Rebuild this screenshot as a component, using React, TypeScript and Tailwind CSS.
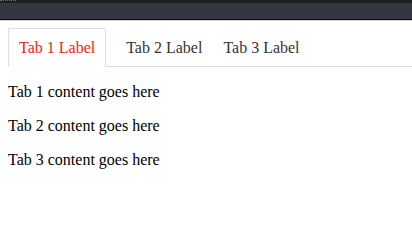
import React, { useState } from 'react';

const tabs = ['Tab 1 Label', 'Tab 2 Label', 'Tab 3 Label'];

export default function App() {
  const [active, setActive] = useState(0);

  return (
    <div className="min-h-[201px] bg-white font-['Liberation_Serif','Times_New_Roman',serif] text-[16px] text-black">
      {/* window strip */}
      <div className="h-[3px] bg-[#1e1f23]">
        <div className="w-4 border-t border-dotted border-[#6b6e78]" />
      </div>
      <div className="h-[16px] bg-[#343741]" />
      <div className="h-px bg-[#0d0e10]" />
      <div className="h-px bg-[#d4d4d4]" />

      <ul className="mt-[7px] ml-2 flex border-b border-[#dddddd]">
        {tabs.map((label, i) => (
          <li key={label} className="-mb-px">
            <button
              onClick={() => setActive(i)}
              className={`block border px-[10px] pt-[10px] pb-[9px] leading-[18px] ${
                i === active
                  ? 'border-[#dddddd] border-b-white text-[#ee1c25]'
                  : 'border-transparent text-[#333333]'
              } ${i === 1 ? 'ml-[9px]' : ''} ${i === 2 ? 'ml-[-1px]' : ''}`}
            >
              {label}
            </button>
          </li>
        ))}
      </ul>

      <div className="px-2 pt-4">
        <p className="leading-[18px]">Tab 1 content goes here</p>
        <p className="mt-4 leading-[18px]">Tab 2 content goes here</p>
        <p className="mt-4 leading-[18px]">Tab 3 content goes here</p>
      </div>
    </div>
  );
}
